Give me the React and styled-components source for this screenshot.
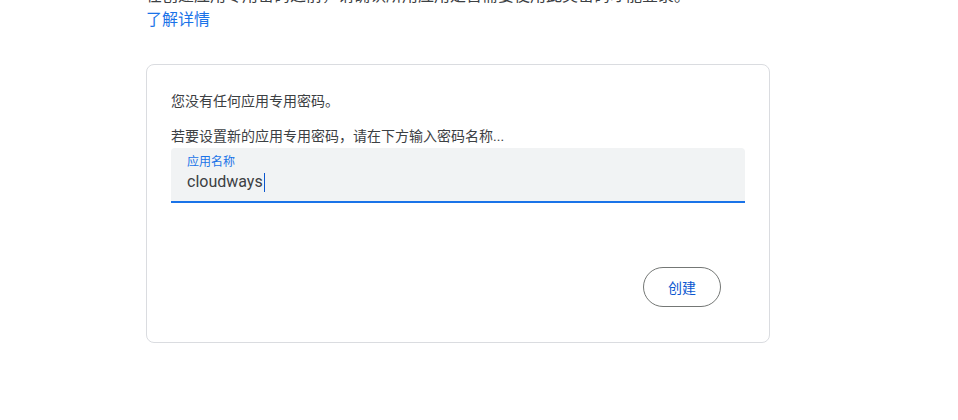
import React from "react";
import styled, { createGlobalStyle } from "styled-components";

const GlobalStyle = createGlobalStyle`
  body {
    margin: 0;
    background: #fff;
    font-family: Roboto, "Noto Sans CJK SC", "Noto Sans", sans-serif;
    color: #3c4043;
    overflow: hidden;
  }
`;

const Page = styled.div`
  padding-left: 146px;
  width: 624px;
`;

const Intro = styled.p`
  margin: -16px 0 0;
  font-size: 16px;
  line-height: 24px;
  color: #3c4043;
  white-space: nowrap;
`;

const LearnMore = styled.a`
  display: block;
  font-size: 16px;
  line-height: 24px;
  color: #1a73e8;
  text-decoration: none;
`;

const Card = styled.section`
  margin-top: 32px;
  border: 1px solid #dadce0;
  border-radius: 8px;
  padding: 26px 24px 24px;
  display: flex;
  flex-direction: column;
`;

const Text = styled.p`
  margin: 0 0 ${(p) => p.$gap}px;
  font-size: 14px;
  line-height: 20px;
  color: #3c4043;
`;

const Field = styled.div`
  background: #f1f3f4;
  border-radius: 4px 4px 0 0;
  border-bottom: 2px solid #1a73e8;
  padding: 6px 16px 7px;
  display: flex;
  flex-direction: column;
`;

const Label = styled.span`
  font-size: 12px;
  line-height: 16px;
  color: #1a73e8;
`;

const Value = styled.div`
  font-size: 16px;
  line-height: 24px;
  color: #3c4043;
  display: flex;
  align-items: center;
`;

const Caret = styled.span`
  display: inline-block;
  width: 1px;
  height: 19px;
  background: #0b57d0;
  margin-left: 1px;
`;

const Actions = styled.div`
  display: flex;
  justify-content: flex-end;
  padding: 64px 24px 11px 0;
`;

const Button = styled.button`
  width: 78px;
  height: 40px;
  border: 1px solid #747775;
  border-radius: 20px;
  background: #fff;
  color: #0b57d0;
  font-family: Roboto, "Noto Sans CJK SC", sans-serif;
  font-size: 14px;
  cursor: pointer;
`;

export default function App() {
  return (
    <>
      <GlobalStyle />
      <Page>
        <Intro>在创建应用专用密码之前，请确认所用应用是否需要使用此类密码才能登录。</Intro>
        <LearnMore href="#">了解详情</LearnMore>
        <Card>
          <Text $gap={15}>您没有任何应用专用密码。</Text>
          <Text $gap={2}>若要设置新的应用专用密码，请在下方输入密码名称...</Text>
          <Field>
            <Label>应用名称</Label>
            <Value>
              cloudways
              <Caret />
            </Value>
          </Field>
          <Actions>
            <Button>创建</Button>
          </Actions>
        </Card>
      </Page>
    </>
  );
}
